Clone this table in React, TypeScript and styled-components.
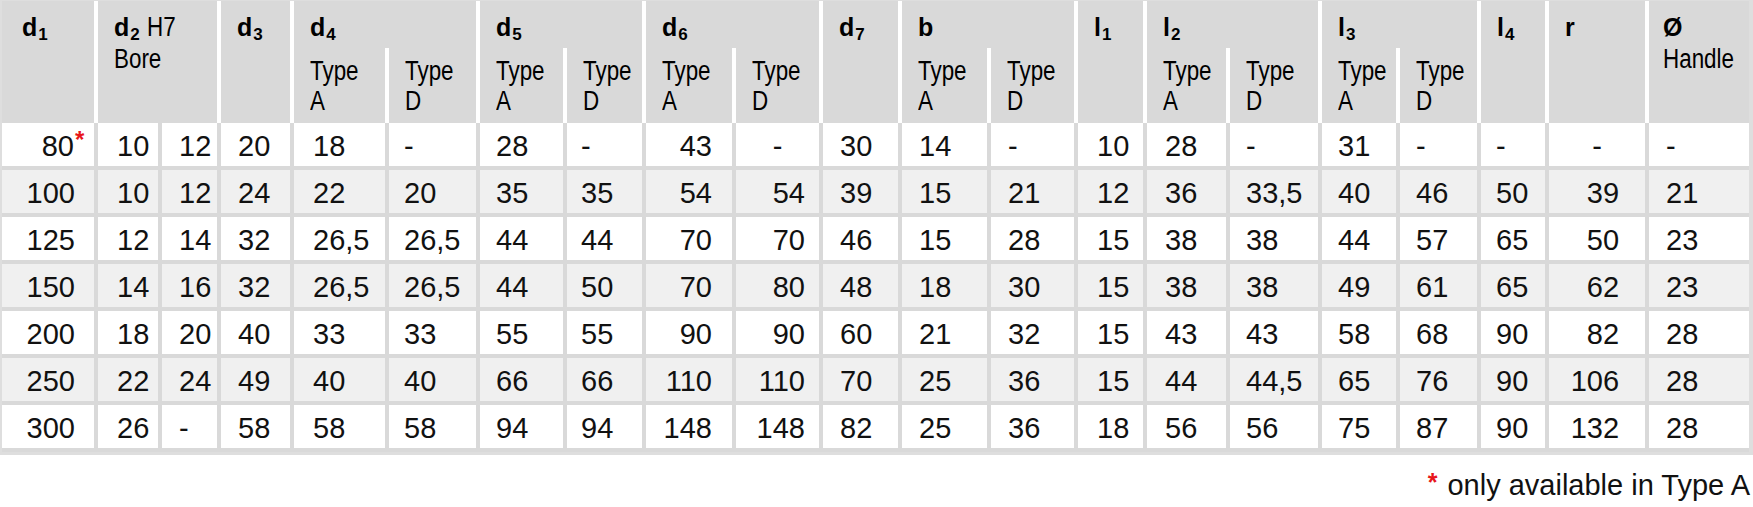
import React from 'react';
import styled, { createGlobalStyle } from 'styled-components';

const GlobalStyle = createGlobalStyle`
  html, body { margin: 0; padding: 0; background: #ffffff; }
  body { font-family: "Liberation Sans", Arial, Helvetica, sans-serif; color: #111; }
`;

type Align = 'left' | 'right';
interface ColSpec { w: number; align: Align; pad: number; }

const cols: ColSpec[] = [
  { w: 96, align: 'right', pad: 19 },
  { w: 64, align: 'left', pad: 19 },
  { w: 59, align: 'left', pad: 17 },
  { w: 73, align: 'left', pad: 17 },
  { w: 95, align: 'left', pad: 19 },
  { w: 91, align: 'left', pad: 15 },
  { w: 87, align: 'left', pad: 16 },
  { w: 79, align: 'left', pad: 14 },
  { w: 90, align: 'right', pad: 20 },
  { w: 87, align: 'right', pad: 14 },
  { w: 79, align: 'left', pad: 17 },
  { w: 89, align: 'left', pad: 17 },
  { w: 87, align: 'left', pad: 17 },
  { w: 69, align: 'left', pad: 19 },
  { w: 83, align: 'left', pad: 18 },
  { w: 92, align: 'left', pad: 16 },
  { w: 78, align: 'left', pad: 16 },
  { w: 81, align: 'left', pad: 16 },
  { w: 68, align: 'left', pad: 15 },
  { w: 100, align: 'right', pad: 26 },
  { w: 100, align: 'left', pad: 17 },
];

const rows: string[][] = [
  ['80', '10', '12', '20', '18', '-', '28', '-', '43', '-', '30', '14', '-', '10', '28', '-', '31', '-', '-', '-', '-'],
  ['100', '10', '12', '24', '22', '20', '35', '35', '54', '54', '39', '15', '21', '12', '36', '33,5', '40', '46', '50', '39', '21'],
  ['125', '12', '14', '32', '26,5', '26,5', '44', '44', '70', '70', '46', '15', '28', '15', '38', '38', '44', '57', '65', '50', '23'],
  ['150', '14', '16', '32', '26,5', '26,5', '44', '50', '70', '80', '48', '18', '30', '15', '38', '38', '49', '61', '65', '62', '23'],
  ['200', '18', '20', '40', '33', '33', '55', '55', '90', '90', '60', '21', '32', '15', '43', '43', '58', '68', '90', '82', '28'],
  ['250', '22', '24', '49', '40', '40', '66', '66', '110', '110', '70', '25', '36', '15', '44', '44,5', '65', '76', '90', '106', '28'],
  ['300', '26', '-', '58', '58', '58', '94', '94', '148', '148', '82', '25', '36', '18', '56', '56', '75', '87', '90', '132', '28'],
];

const Page = styled.div`
  width: 1753px;
  height: 507px;
  display: flex;
  flex-direction: column;
  background: #fff;
`;

const Table = styled.table`
  border-collapse: separate;
  border-spacing: 0;
  table-layout: fixed;
  width: 1753px;
  border-style: solid;
  border-color: #dedede;
  border-width: 1px 4px 3px 2px;
  box-sizing: border-box;
`;

const Th = styled.th<{ $last?: boolean; $sub?: boolean; $pad?: number }>`
  box-sizing: border-box;
  background: #d9d9d9;
  border-right: ${(p) => (p.$last ? '0' : '4px solid #ffffff')};
  padding: ${(p) => (p.$sub ? '8px 0 0' : '10px 0 0')} ${(p) => p.$pad ?? 16}px;
  padding-right: 0;
  text-align: left;
  vertical-align: top;
  font-family: "Liberation Sans", Arial, sans-serif;
  font-weight: 700;
  font-size: 25px;
  line-height: 32px;
  color: #000;
  white-space: nowrap;
  overflow: hidden;
`;

const HeadRow = styled.tr<{ $h: number }>`
  height: ${(p) => p.$h}px;
`;

const Sub = styled.sub`
  font-size: 17px;
  line-height: 0;
  vertical-align: -4px;
  margin-left: 1px;
`;

const Narrow = styled.span`
  display: inline-block;
  font-family: "Liberation Sans", Arial, sans-serif;
  font-weight: 400;
  font-size: 27px;
  line-height: 30px;
  color: #000;
  transform: scaleX(0.83);
  transform-origin: left top;
`;

const TypeText = styled(Narrow)`
  display: block;
`;

const BodyRow = styled.tr<{ $alt: boolean }>`
  background: ${(p) => (p.$alt ? '#f0f0f0' : '#ffffff')};
`;

const Td = styled.td<{ $align: string; $pad: number; $last?: boolean }>`
  box-sizing: border-box;
  height: 47px;
  border-right: ${(p) => (p.$last ? '0' : '4px solid #d9d9d9')};
  border-bottom: 4px solid #d9d9d9;
  text-align: ${(p) => p.$align};
  padding: 4px ${(p) => (p.$align === 'right' ? `${p.$pad}px` : '0')} 0 ${(p) => (p.$align === 'left' ? `${p.$pad}px` : '0')};
  vertical-align: middle;
  font-family: "Liberation Sans", Arial, sans-serif;
  font-size: 29px;
  line-height: 1;
  color: #111;
  white-space: nowrap;
`;

const Star = styled.sup`
  color: #e8161b;
  font-weight: 700;
  font-size: 24px;
  line-height: 0;
  vertical-align: 8px;
  display: inline-block;
  width: 0;
  margin-left: 1px;
`;

const Footer = styled.div`
  display: flex;
  justify-content: flex-end;
  align-items: baseline;
  padding: 16px 3px 0 0;
  font-family: "Liberation Sans", Arial, sans-serif;
  font-size: 29px;
  line-height: 29px;
  color: #111;
`;

const FootStar = styled.span`
  color: #e8161b;
  font-weight: 700;
  font-size: 25px;
  position: relative;
  top: -4px;
  margin-right: 10px;
`;

const Head = ({ l, s }: { l: string; s?: string }) => (
  <>
    {l}
    {s ? <Sub>{s}</Sub> : null}
  </>
);

const TypeCell = ({ t }: { t: string }) => (
  <Th $sub>
    <TypeText>
      Type
      <br />
      {t}
    </TypeText>
  </Th>
);

export default function App() {
  return (
    <Page>
      <GlobalStyle />
      <Table>
        <colgroup>
          {cols.map((c, i) => (
            <col key={i} style={{ width: c.w }} />
          ))}
        </colgroup>
        <thead>
          <HeadRow $h={47}>
            <Th rowSpan={2} $pad={20}>
              <Head l="d" s="1" />
            </Th>
            <Th rowSpan={2} colSpan={2}>
              <Head l="d" s="2" /> <Narrow>H7</Narrow>
              <br />
              <Narrow>Bore</Narrow>
            </Th>
            <Th rowSpan={2}>
              <Head l="d" s="3" />
            </Th>
            <Th colSpan={2}>
              <Head l="d" s="4" />
            </Th>
            <Th colSpan={2}>
              <Head l="d" s="5" />
            </Th>
            <Th colSpan={2}>
              <Head l="d" s="6" />
            </Th>
            <Th rowSpan={2}>
              <Head l="d" s="7" />
            </Th>
            <Th colSpan={2}>
              <Head l="b" />
            </Th>
            <Th rowSpan={2}>
              <Head l="l" s="1" />
            </Th>
            <Th colSpan={2}>
              <Head l="l" s="2" />
            </Th>
            <Th colSpan={2}>
              <Head l="l" s="3" />
            </Th>
            <Th rowSpan={2}>
              <Head l="l" s="4" />
            </Th>
            <Th rowSpan={2}>
              <Head l="r" />
            </Th>
            <Th rowSpan={2} $last $pad={14}>
              Ø
              <br />
              <Narrow>Handle</Narrow>
            </Th>
          </HeadRow>
          <HeadRow $h={75}>
            {['d4', 'd5', 'd6', 'b', 'l2', 'l3'].map((g) => (
              <React.Fragment key={g}>
                <TypeCell t="A" />
                <TypeCell t="D" />
              </React.Fragment>
            ))}
          </HeadRow>
        </thead>
        <tbody>
          {rows.map((r, ri) => (
            <BodyRow key={ri} $alt={ri % 2 === 1}>
              {r.map((v, ci) => {
                const c = cols[ci];
                const isDash = v === '-';
                const align = isDash && c.align === 'right' ? 'center' : c.align;
                return (
                  <Td key={ci} $align={align} $pad={c.pad} $last={ci === cols.length - 1}>
                    {v}
                    {ri === 0 && ci === 0 ? <Star>*</Star> : null}
                  </Td>
                );
              })}
            </BodyRow>
          ))}
        </tbody>
      </Table>
      <Footer>
        <FootStar>*</FootStar>
        <span>only available in Type A</span>
      </Footer>
    </Page>
  );
}
